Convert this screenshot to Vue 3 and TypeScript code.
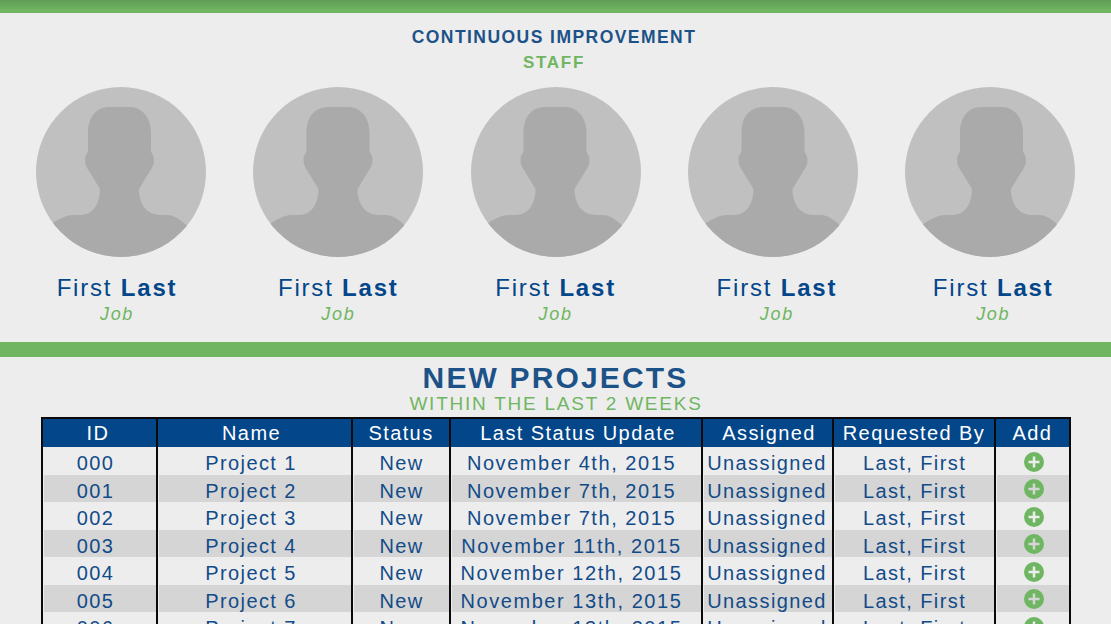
<script setup lang="ts">
interface Person {
  first: string
  last: string
  job: string
  shift: number
  head: number
}

interface Project {
  id: string
  name: string
  updated: string
}

const people: Person[] = [
  { first: 'First', last: 'Last', job: 'Job', shift: -4, head: 0 },
  { first: 'First', last: 'Last', job: 'Job', shift: 0, head: 1.5 },
  { first: 'First', last: 'Last', job: 'Job', shift: 0, head: 0.5 },
  { first: 'First', last: 'Last', job: 'Job', shift: 4, head: 1.5 },
  { first: 'First', last: 'Last', job: 'Job', shift: 3, head: 3 }
]

const headers = ['ID', 'Name', 'Status', 'Last Status Update', 'Assigned', 'Requested By', 'Add']
const widths = [115, 195, 98, 252, 131, 162, 75]

const projects: Project[] = [
  { id: '000', name: 'Project 1', updated: 'November 4th, 2015' },
  { id: '001', name: 'Project 2', updated: 'November 7th, 2015' },
  { id: '002', name: 'Project 3', updated: 'November 7th, 2015' },
  { id: '003', name: 'Project 4', updated: 'November 11th, 2015' },
  { id: '004', name: 'Project 5', updated: 'November 12th, 2015' },
  { id: '005', name: 'Project 6', updated: 'November 13th, 2015' },
  { id: '006', name: 'Project 7', updated: 'November 13th, 2015' }
]
</script>

<template>
  <div class="page">
    <div class="bar bar-top"></div>

    <section class="staff">
      <h2 class="staff-title">CONTINUOUS IMPROVEMENT</h2>
      <h3 class="staff-sub">STAFF</h3>
      <div class="people">
        <div v-for="(p, i) in people" :key="i" class="person">
          <svg class="avatar" viewBox="0 0 170 170" width="170" height="170">
            <defs>
              <clipPath :id="`circle-${i}`">
                <circle cx="85" cy="85" r="85" />
              </clipPath>
            </defs>
            <circle cx="85" cy="85" r="85" fill="#c0c0c0" />
            <g :clip-path="`url(#circle-${i})`">
              <path
                :transform="`translate(${p.head} 0)`"
                fill="#aaaaaa"
                d="M74 20H93C106 20 115 30 115 46V64C115.5 67 118 68 118 73C118 78 116 81 114 84L103 102C103 112 107 128 125 128H131C138 128 144 132 152 140V175H15V137C23 132 30 128 37 128H44C60 128 64 112 64 102L53 84C51 81 49 78 49 73C49 68 51.5 67 52 64V46C52 30 60 20 74 20Z"
              />
            </g>
          </svg>
          <div class="person-text" :style="{ marginLeft: `${p.shift * 2}px` }">
            <div class="person-name">{{ p.first }} <b>{{ p.last }}</b></div>
            <div class="person-job">{{ p.job }}</div>
          </div>
        </div>
      </div>
    </section>

    <div class="bar bar-mid"></div>

    <section class="projects">
      <h1 class="projects-title">NEW PROJECTS</h1>
      <h3 class="projects-sub">WITHIN THE LAST 2 WEEKS</h3>
      <table class="table">
        <colgroup>
          <col v-for="(w, i) in widths" :key="i" :style="{ width: `${w}px` }" />
        </colgroup>
        <thead>
          <tr>
            <th v-for="h in headers" :key="h">{{ h }}</th>
          </tr>
        </thead>
        <tbody>
          <tr v-for="row in projects" :key="row.id">
            <td>{{ row.id }}</td>
            <td>{{ row.name }}</td>
            <td>New</td>
            <td class="date">{{ row.updated }}</td>
            <td>Unassigned</td>
            <td>Last, First</td>
            <td class="add-cell">
              <svg class="add" viewBox="0 0 20 20" width="20" height="20">
                <circle cx="10" cy="10" r="10" fill="#6fb662" />
                <path d="M10 4.5v11M4.5 10h11" stroke-width="2.5" fill="none" />
              </svg>
            </td>
          </tr>
        </tbody>
      </table>
    </section>
  </div>
</template>

<style scoped>
.page {
  height: 624px;
  overflow: hidden;
  background: #ededed;
  font-family: 'Liberation Sans', Arial, sans-serif;
  color: #1a5088;
}

.bar {
  background: #70b662;
}

.bar-top {
  height: 13px;
  background: linear-gradient(to bottom, #5f9c55, #70b662 80%);
}

.bar-mid {
  height: 15px;
}

.staff {
  height: 329px;
  padding-top: 13px;
  box-sizing: border-box;
  text-align: center;
}

.staff-title {
  margin: 0 3px 0 0;
  font-size: 17.5px;
  line-height: 22px;
  font-weight: 700;
  letter-spacing: 1.45px;
  color: #1d5288;
}

.staff-sub {
  margin: 4px 3px 0 0;
  font-size: 17px;
  line-height: 22px;
  font-weight: 700;
  letter-spacing: 1.7px;
  color: #70b662;
}

.people {
  display: flex;
  gap: 47.3px;
  margin: 13px 0 0 36px;
}

.person {
  width: 170px;
  display: flex;
  flex-direction: column;
  align-items: center;
}

.avatar {
  display: block;
}

.person-text {
  margin-top: 17px;
  white-space: nowrap;
}

.person-name {
  font-size: 24px;
  line-height: 28px;
  letter-spacing: 1.8px;
  color: #03468a;
}

.person-job {
  margin-top: 1px;
  font-size: 18px;
  line-height: 22px;
  font-style: italic;
  letter-spacing: 1.7px;
  color: #70b662;
}

.projects {
  text-align: center;
}

.projects-title {
  margin: 5px 0 0;
  font-size: 30px;
  line-height: 32px;
  font-weight: 700;
  letter-spacing: 2.15px;
  color: #1d5288;
}

.projects-sub {
  margin: 0 0 0 1px;
  font-size: 19px;
  line-height: 20px;
  font-weight: 400;
  letter-spacing: 1.76px;
  color: #70b662;
}

.table {
  margin: 3px 0 0 41px;
  width: 1030px;
  table-layout: fixed;
  border-collapse: separate;
  border-spacing: 0;
  border-top: 2px solid #0a0a0a;
  border-left: 2px solid #0a0a0a;
  font-size: 20px;
  letter-spacing: 1.4px;
}

th,
td {
  padding: 0;
  text-align: center;
  white-space: nowrap;
  border-right: 2px solid #0a0a0a;
}

th {
  height: 28px;
  font-weight: 400;
  color: #fff;
  background: #03468a;
}

th:nth-child(1) {
  padding-right: 3px;
}

th:nth-child(2) {
  padding-right: 6px;
}

th:nth-child(4) {
  padding-left: 4px;
}

th:nth-child(5) {
  padding-left: 3px;
}

td {
  box-sizing: border-box;
  height: 27.5px;
  padding-top: 4.5px;
  line-height: 22px;
  color: #124b88;
  border-left: 1px solid #ededed;
  background-clip: padding-box;
}

td:nth-child(1) {
  padding-right: 9px;
}

td:nth-child(2) {
  padding-right: 8px;
}

td:nth-child(5) {
  padding-right: 2px;
}

td.date {
  padding-right: 10px;
  letter-spacing: 1.55px;
}

td.add-cell {
  padding: 1.5px 0 0 1px;
  line-height: 0;
}

tbody tr:nth-child(even) td {
  background-color: #d5d5d5;
}

.add {
  display: block;
  margin: 0 auto;
}

.add path {
  stroke: #ededed;
}

tbody tr:nth-child(even) .add path {
  stroke: #d5d5d5;
}
</style>

<style>
html,
body {
  margin: 0;
  overflow: hidden;
}
</style>
